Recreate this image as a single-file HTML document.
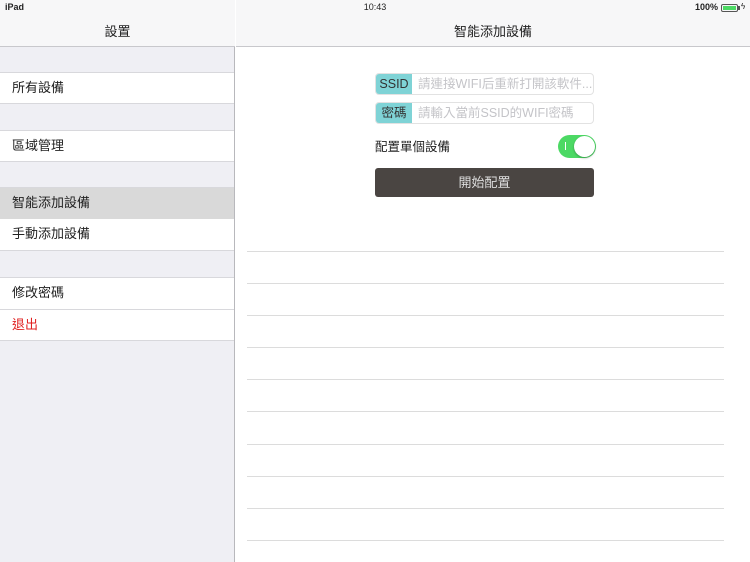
<!DOCTYPE html>
<html><head><meta charset="utf-8"><style>
*{margin:0;padding:0;box-sizing:border-box}
body{width:750px;height:562px;overflow:hidden;font-family:"Liberation Sans","Noto Sans CJK TC",sans-serif;background:#fff;position:relative;color:#222}
.abs{position:absolute}
#left{left:0;top:0;width:235px;height:562px;background:#efeff4;border-right:1px solid #b8b8bc}
.nav{top:0;height:47px;background:#f7f7f8;border-bottom:1px solid #c8c8cc}
.row{position:absolute;left:0;width:234px;height:32px;background:#fff;border-top:1px solid #d8d8dc;border-bottom:1px solid #d8d8dc;font-size:13px;line-height:30px;padding-left:12px}
.line{position:absolute;left:247px;width:477px;height:1px;background:#dcdcdc}
.inp{position:absolute;left:375px;width:219px;height:22px;border:1px solid #e2e2e2;border-radius:4px;overflow:hidden;font-size:12.5px;line-height:20px}
.inp .l{position:absolute;left:0;top:0;width:36px;height:20px;background:#7fd3d6;color:#333;text-align:center}
.inp .p{position:absolute;left:42px;top:0;color:#c4c4c8;white-space:nowrap}
</style></head><body>
<div id="left" class="abs"></div>
<div class="abs nav" style="left:0;width:235px"></div>
<div class="abs nav" style="left:236px;width:514px"></div>
<div class="abs" style="left:5px;top:2px;font-size:9px;font-weight:bold">iPad</div>
<div class="abs" style="left:0;width:750px;top:2px;font-size:9px;text-align:center">10:43</div>
<div class="abs" style="left:695px;top:2px;font-size:9px;font-weight:bold">100%</div>
<div class="abs" style="left:721px;top:4px;width:17px;height:8px;border:1px solid #555;border-radius:2px;padding:1px"><div style="width:100%;height:100%;background:#4cd964"></div></div>
<div class="abs" style="left:738px;top:6px;width:1.5px;height:4px;background:#555"></div>
<div class="abs" style="left:741px;top:2px;font-size:8px">ϟ</div>
<div class="abs" style="left:0;width:235px;top:21px;text-align:center;font-size:13px">設置</div>
<div class="abs" style="left:236px;width:514px;top:21px;text-align:center;font-size:13px">智能添加設備</div>

<div class="row" style="top:72px">所有設備</div>
<div class="row" style="top:130px">區域管理</div>
<div class="row" style="top:187px;background:#d9d9d9;border-bottom:none">智能添加設備</div>
<div class="row" style="top:219px;border-top:none">手動添加設備</div>
<div class="row" style="top:277px;border-bottom:none">修改密碼</div>
<div class="row" style="top:309px;color:#e02020">退出</div>

<div class="inp" style="top:73px"><div class="l">SSID</div><div class="p">請連接WIFI后重新打開該軟件...</div></div>
<div class="inp" style="top:102px"><div class="l">密碼</div><div class="p">請輸入當前SSID的WIFI密碼</div></div>
<div class="abs" style="left:375px;top:136px;font-size:12.5px">配置單個設備</div>
<div class="abs" style="left:558px;top:135px;width:38px;height:23px;border-radius:12px;background:#4cd964"></div>
<div class="abs" style="left:565px;top:142px;width:1px;height:8px;background:#fff"></div>
<div class="abs" style="left:574px;top:136px;width:21px;height:21px;border-radius:50%;background:#fff;box-shadow:0 1px 2px rgba(0,0,0,.3)"></div>
<div class="abs" style="left:375px;top:168px;width:219px;height:29px;border-radius:3px;background:#4a4542;color:#ddd;font-size:13px;text-align:center;line-height:29px">開始配置</div>

<div class="line" style="top:251px"></div>
<div class="line" style="top:283px"></div>
<div class="line" style="top:315px"></div>
<div class="line" style="top:347px"></div>
<div class="line" style="top:379px"></div>
<div class="line" style="top:411px"></div>
<div class="line" style="top:444px"></div>
<div class="line" style="top:476px"></div>
<div class="line" style="top:508px"></div>
<div class="line" style="top:540px"></div>
</body></html>
